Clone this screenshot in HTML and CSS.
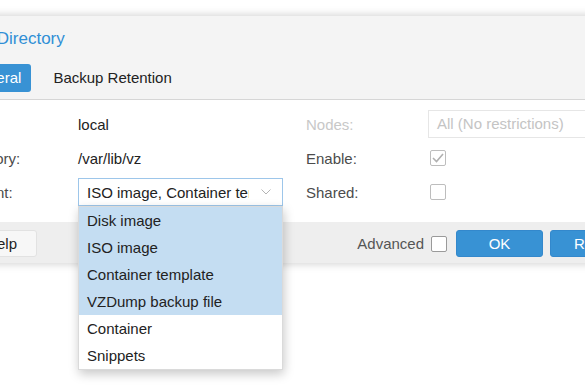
FILE: index.html
```html
<!DOCTYPE html>
<html>
<head>
<meta charset="utf-8">
<link rel="stylesheet" href="styles.css">
</head>
<body>
<div class="page">
<div class="dialog">
  <div class="header">
    <div class="title">Edit: Directory</div>
    <div class="tabs">
      <div class="tab active">General</div>
      <div class="tab">Backup Retention</div>
    </div>
  </div>
  <div class="body">
    <div class="col">
      <div class="row"><div class="label">ID:</div><div class="value">local</div></div>
      <div class="row"><div class="label">Directory:</div><div class="value">/var/lib/vz</div></div>
      <div class="row"><div class="label">Content:</div>
        <div class="combo">
          <div class="combo-text">ISO image, Container template</div>
          <div class="combo-trigger"><svg width="10" height="6" viewBox="0 0 10 6"><polyline points="0.5,0.5 5,5 9.5,0.5" fill="none" stroke="#b4b4b4" stroke-width="1"/></svg></div>
          <div class="picker">
            <div class="item sel">Disk image</div>
            <div class="item sel">ISO image</div>
            <div class="item sel">Container template</div>
            <div class="item sel">VZDump backup file</div>
            <div class="item">Container</div>
            <div class="item">Snippets</div>
          </div>
        </div>
      </div>
    </div>
    <div class="col">
      <div class="row"><div class="label disabled">Nodes:</div><div class="field-disabled">All (No restrictions)</div></div>
      <div class="row"><div class="label">Enable:</div>
        <svg class="cb" width="16" height="16" viewBox="0 0 16 16"><rect x="0.5" y="0.5" width="15" height="15" rx="1.5" fill="#fff" stroke="#bdbdbd"/><polyline points="3,8 6.5,11.5 13,4" fill="none" stroke="#b0b0b0" stroke-width="1.6"/></svg>
      </div>
      <div class="row"><div class="label">Shared:</div>
        <svg class="cb" width="16" height="16" viewBox="0 0 16 16"><rect x="0.5" y="0.5" width="15" height="15" rx="1.5" fill="#fff" stroke="#bdbdbd"/></svg>
      </div>
    </div>
  </div>
  <div class="footer">
    <div class="btn help">Help</div>
    <div class="spacer"></div>
    <div class="adv">Advanced</div>
    <svg class="advcb" width="16" height="16" viewBox="0 0 16 16"><rect x="0.5" y="0.5" width="15" height="15" rx="1.5" fill="#fff" stroke="#9a9a9a"/></svg>
    <div class="btn primary">OK</div>
    <div class="btn primary">Reset</div>
  </div>
</div>
</div>
</body>
</html>
```
FILE: styles.css
```css
html, body {
  margin: 0;
  height: 390px;
  background: #fff;
}
body {
  font-family: "Liberation Sans", Arial, sans-serif;
  font-size: 15px;
  color: #222;
}
.page {
  width: 585px;
  height: 390px;
  padding-top: 16px;
  box-sizing: border-box;
  overflow: hidden;
}
.dialog {
  margin-left: -52px;
  width: 699px;
  background: #fff;
  box-shadow: 0 0 9px rgba(0, 0, 0, 0.22);
}
.header {
  background: #f4f4f4;
  padding: 11px 10px 7px;
  border-bottom: 1px solid #d6d6d6;
}
.title {
  font-size: 17px;
  line-height: 24px;
  color: #2f8fd6;
}
.tabs {
  display: flex;
  gap: 12px;
  margin-top: 13px;
}
.tab {
  height: 28px;
  line-height: 28px;
  padding: 0 10px;
  border-radius: 3px;
  color: #222;
}
.tab.active {
  background: #3892d4;
  color: #fff;
}
.body {
  display: flex;
  gap: 23px;
  padding: 10px 8px 16px;
}
.col {
  display: flex;
  flex-direction: column;
  gap: 6px;
}
.row {
  display: flex;
  align-items: center;
  height: 28px;
}
.label {
  width: 122px;
  color: #4c4c4c;
}
.label.disabled {
  color: #c8c8c8;
}
.value {
  color: #222;
}
.combo {
  position: relative;
  box-sizing: border-box;
  width: 205px;
  height: 28px;
  border: 1px solid #9dc6ea;
  display: flex;
  align-items: center;
  background: #fff;
}
.combo-text {
  flex: 1;
  padding-left: 8px;
  white-space: nowrap;
  overflow: hidden;
  color: #222;
}
.combo-trigger {
  width: 33px;
  height: 100%;
  display: flex;
  align-items: center;
  justify-content: flex-start;
  padding-left: 12px;
  box-sizing: border-box;
}
.picker {
  position: absolute;
  left: -1px;
  top: 27px;
  width: 205px;
  box-sizing: border-box;
  border: 1px solid #dadada;
  background: #fff;
  box-shadow: 1px 4px 10px rgba(0, 0, 0, 0.22);
  z-index: 5;
}
.item {
  height: 27px;
  line-height: 27px;
  padding-left: 8px;
  color: #222;
}
.item.sel {
  background: #c4ddf2;
}
.field-disabled {
  box-sizing: border-box;
  width: 205px;
  height: 28px;
  line-height: 26px;
  border: 1px solid #e6e6e6;
  padding-left: 8px;
  color: #c4c4c4;
  white-space: nowrap;
}
.cb {
  margin-left: 2px;
  display: block;
}
.footer {
  display: flex;
  align-items: center;
  background: #eeeeee;
  padding: 8px 10px 6px;
}
.btn {
  box-sizing: border-box;
  height: 27px;
  line-height: 25px;
  border-radius: 3px;
  text-align: center;
}
.help {
  width: 79px;
  text-align: right;
  padding-right: 19px;
  background: #f7f7f7;
  border: 1px solid #e2e2e2;
  color: #222;
}
.spacer {
  flex: 1;
}
.adv {
  color: #555;
}
.advcb {
  display: block;
  margin: 0 9px 0 7px;
}
.primary {
  width: 87px;
  background: #3892d4;
  border: 1px solid #3388cc;
  color: #fff;
}
.primary + .primary {
  margin-left: 7px;
}
```
